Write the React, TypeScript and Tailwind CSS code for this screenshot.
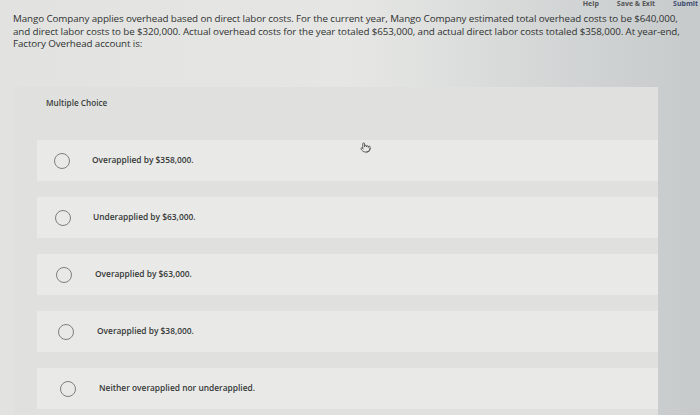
import { Pointer } from 'lucide-react';

const options = [
  { label: 'Overapplied by $358,000.', circle: 'ml-[17px]', text: 'ml-[22px]' },
  { label: 'Underapplied by $63,000.', circle: 'ml-[18px]', text: 'ml-[22px]' },
  { label: 'Overapplied by $63,000.', circle: 'ml-[19px]', text: 'ml-[23px]' },
  { label: 'Overapplied by $38,000.', circle: 'ml-[21px]', text: 'ml-[23px]' },
  { label: 'Neither overapplied nor underapplied.', circle: 'ml-[23px]', text: 'ml-[23px]' },
];

export default function App() {
  return (
    <div className="relative w-[700px] h-[415px] overflow-hidden bg-gradient-to-r from-[#e2e3e1] via-[#e6e7e5] to-[#c6cacb] font-['Open_Sans',sans-serif] text-[#2f3130]">
      {/* top bar */}
      <div className="h-[9px] flex justify-end items-start gap-[18px] pr-[2px] text-[7px] font-bold leading-[8px] text-[#555]">
        <span>Help</span>
        <span>Save &amp; Exit</span>
        <span className="text-[#3c4d6e]">Submit</span>
      </div>

      {/* question */}
      <div className="pl-[13px] pr-[20px] pt-[4px] text-[9.8px] leading-[12.7px] tracking-[-0.1px] text-[#303231]">
        Mango Company applies overhead based on direct labor costs. For the current year, Mango Company estimated total overhead costs to be $640,000,
        and direct labor costs to be $320,000. Actual overhead costs for the year totaled $653,000, and actual direct labor costs totaled $358,000. At year-end,
        Factory Overhead account is:
      </div>

      {/* multiple choice panel */}
      <div className="mt-[36px] ml-[15px] w-[643px] h-[330px] bg-[#e0e1df]">
        <div className="h-[32px] pl-[31px] flex items-center text-[8.2px] font-semibold text-[#3a3c3b]">Multiple Choice</div>
        <div className="ml-[22px] pt-[21px] flex flex-col gap-[16px]">
          {options.map((o, i) => (
            <div key={i} className="h-[41px] bg-[#e9eae8] flex items-center">
              <span className={`${o.circle} w-[16px] h-[16px] rounded-full border-[1.5px] border-[#7d7f7e] shrink-0`} />
              <span className={`${o.text} text-[8.4px] font-semibold text-[#363837]`}>{o.label}</span>
            </div>
          ))}
        </div>
      </div>

      {/* cursor */}
      <Pointer className="absolute left-[360px] top-[142px] w-[11px] h-[11px] text-[#555]" strokeWidth={2} />
    </div>
  );
}
